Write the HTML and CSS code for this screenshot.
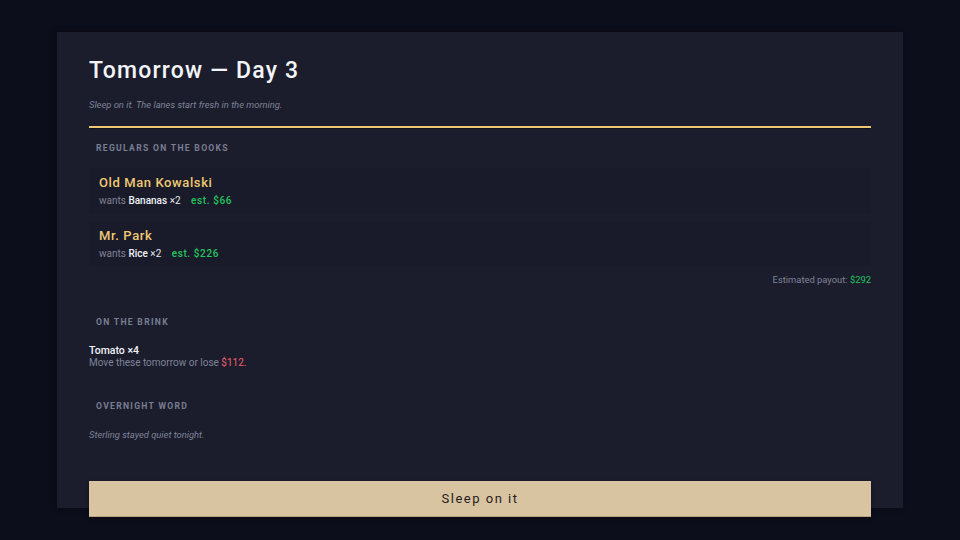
FILE: index.html
```html
<!DOCTYPE html>
<html lang="en">
<head>
    <meta charset="UTF-8">
    <meta name="viewport" content="width=device-width, initial-scale=1.0">
    <title>Tomorrow — Day 3</title>
    <link rel="stylesheet" href="styles.css">
</head>
<body>
    <div class="summary">
        <h1>Tomorrow — Day 3</h1>
        <p class="tagline">Sleep on it. The lanes start fresh in the morning.</p>
        <div class="rule"></div>

        <section class="block">
            <h2 class="label">Regulars on the books</h2>
            <div class="regular">
                <div class="regular-name">Old Man Kowalski</div>
                <div class="regular-want">wants <span class="qty"><b>Bananas</b> ×2</span> <span class="est">est. $66</span></div>
            </div>
            <div class="regular">
                <div class="regular-name">Mr. Park</div>
                <div class="regular-want">wants <span class="qty"><b>Rice</b> ×2</span> <span class="est">est. $226</span></div>
            </div>
            <div class="payout">Estimated payout: <span class="money">$292</span></div>
        </section>

        <section class="block brink">
            <h2 class="label">On the brink</h2>
            <div class="spoil-item">Tomato ×4</div>
            <div class="spoil-note">Move these tomorrow or lose <span class="loss">$112.</span></div>
        </section>

        <section class="block word">
            <h2 class="label">Overnight word</h2>
            <p class="rumor">Sterling stayed quiet tonight.</p>
        </section>

        <button class="sleep">Sleep on it</button>
    </div>
</body>
</html>
```

FILE: styles.css
```css
:root {
    --page: #0d0e1b;
    --panel: #1b1d2d;
    --card: #191b2a;
    --muted: #7f8397;
    --gold: #efc873;
    --green: #22c55e;
    --red: #f0606a;
    --sand: #d9c4a2;
}

html, body {
    margin: 0;
    height: 100%;
}

body {
    background: var(--page);
    font-family: Roboto, 'Noto Sans', sans-serif;
    color: #eceef5;
}

.summary {
    width: 782px;
    height: 452px;
    margin: 32px auto 0;
    padding: 24px 32px 0;
    background: var(--panel);
    box-shadow: -2px 0 6px rgba(0,0,0,0.25);
    display: flex;
    flex-direction: column;
}

h1 {
    margin: 0;
    font-size: 23px;
    line-height: 29px;
    font-weight: 500;
    letter-spacing: 1.2px;
    color: #f4f5f8;
}

.tagline {
    margin: 14px 0 0;
    font-size: 9.4px;
    line-height: 12px;
    font-style: italic;
    color: var(--muted);
}

.rule {
    height: 2px;
    margin-top: 15px;
    background: var(--gold);
    box-shadow: 0 1px 0 rgba(0,0,0,0.4);
}

.label {
    margin: 0 0 0 7px;
    font-size: 8.6px;
    line-height: 12px;
    font-weight: 700;
    letter-spacing: 1.3px;
    text-transform: uppercase;
    color: #7a7e92;
}

.block {
    margin-top: 14px;
}

.block .label {
    margin-bottom: 14px;
}

.regular {
    background: var(--card);
    padding: 6px 10px 5px;
    margin-bottom: 8px;
}

.regular-name {
    font-size: 13px;
    line-height: 18px;
    font-weight: 500;
    letter-spacing: 0.6px;
    color: var(--gold);
}

.regular-want {
    margin-top: 2px;
    font-size: 10px;
    line-height: 14px;
    color: var(--muted);
}

.qty {
    color: #e6e8ef;
}

.qty b {
    color: #f0f2f7;
    font-weight: 500;
}

.est {
    margin-left: 8px;
    color: var(--green);
    font-weight: 500;
    letter-spacing: 0.6px;
}

.payout {
    margin-top: 8px;
    text-align: right;
    font-size: 9.4px;
    line-height: 12px;
    color: var(--muted);
}

.money {
    color: var(--green);
}

.brink {
    margin-top: 30px;
}

.brink .label {
    margin-bottom: 17px;
}

.spoil-item {
    font-size: 10.5px;
    line-height: 11px;
    font-weight: 500;
    color: #f2f3f7;
}

.spoil-note {
    font-size: 10px;
    line-height: 13px;
    color: var(--muted);
}

.loss {
    color: var(--red);
}

.word {
    margin-top: 31px;
}

.word .label {
    margin-bottom: 17px;
}

.rumor {
    margin: 0;
    font-size: 9.4px;
    line-height: 12px;
    font-style: italic;
    color: var(--muted);
}

.sleep {
    margin-top: auto;
    margin-bottom: -9px;
    height: 36px;
    border: none;
    border-bottom: 1px solid #b9a27f;
    background: var(--sand);
    color: #26211c;
    font-family: Roboto, 'Noto Sans', sans-serif;
    font-size: 13px;
    letter-spacing: 1.5px;
    cursor: pointer;
    box-shadow: 0 2px 4px rgba(0,0,0,0.35);
}
```
